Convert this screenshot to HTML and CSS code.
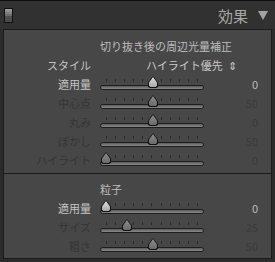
FILE: index.html
```html
<!DOCTYPE html>
<html lang="ja">
<head>
    <meta charset="UTF-8">
    <title>効果</title>
    <link rel="stylesheet" href="styles.css">
</head>
<body>
    <div class="header">
        <span class="toggle"></span>
        <span class="title">効果</span>
        <span class="arrow"></span>
    </div>

    <div class="panel">
        <!-- vignette -->
        <div class="section">
            <div class="row">
                <span></span>
                <span class="heading">切り抜き後の周辺光量補正</span>
            </div>
            <div class="row">
                <span class="label on">スタイル</span>
                <span class="popup">ハイライト優先 <span class="updown">&#8661;</span></span>
            </div>
            <div class="row">
                <span class="label on">適用量</span>
                <div class="slider on"><div class="ticks"><i></i><i></i><i></i><i></i><i></i><i></i><i></i><i></i><i></i><i></i><i></i></div><div class="track"></div><span class="thumb" style="left: 50%"></span></div>
                <span class="value on">0</span>
            </div>
            <div class="row">
                <span class="label">中心点</span>
                <div class="slider"><div class="ticks"><i></i><i></i><i></i><i></i><i></i><i></i><i></i><i></i><i></i><i></i><i></i></div><div class="track"></div><span class="thumb" style="left: 50%"></span></div>
                <span class="value">50</span>
            </div>
            <div class="row">
                <span class="label">丸み</span>
                <div class="slider"><div class="ticks"><i></i><i></i><i></i><i></i><i></i><i></i><i></i><i></i><i></i><i></i><i></i></div><div class="track"></div><span class="thumb" style="left: 50%"></span></div>
                <span class="value">0</span>
            </div>
            <div class="row">
                <span class="label">ぼかし</span>
                <div class="slider"><div class="ticks"><i></i><i></i><i></i><i></i><i></i><i></i><i></i><i></i><i></i><i></i><i></i></div><div class="track"></div><span class="thumb" style="left: 50%"></span></div>
                <span class="value">50</span>
            </div>
            <div class="row">
                <span class="label">ハイライト</span>
                <div class="slider"><div class="ticks"><i></i><i></i><i></i><i></i><i></i><i></i><i></i><i></i><i></i><i></i><i></i></div><div class="track"></div><span class="thumb" style="left: 0%"></span></div>
                <span class="value">0</span>
            </div>
        </div>

        <!-- grain -->
        <div class="section grain">
            <div class="row">
                <span></span>
                <span class="heading">粒子</span>
            </div>
            <div class="row">
                <span class="label on">適用量</span>
                <div class="slider on"><div class="ticks"><i></i><i></i><i></i><i></i><i></i><i></i><i></i><i></i><i></i><i></i><i></i></div><div class="track"></div><span class="thumb" style="left: 0%"></span></div>
                <span class="value on">0</span>
            </div>
            <div class="row">
                <span class="label">サイズ</span>
                <div class="slider"><div class="ticks"><i></i><i></i><i></i><i></i><i></i><i></i><i></i><i></i><i></i><i></i><i></i></div><div class="track"></div><span class="thumb" style="left: 25%"></span></div>
                <span class="value">25</span>
            </div>
            <div class="row">
                <span class="label">粗さ</span>
                <div class="slider"><div class="ticks"><i></i><i></i><i></i><i></i><i></i><i></i><i></i><i></i><i></i><i></i><i></i></div><div class="track"></div><span class="thumb" style="left: 50%"></span></div>
                <span class="value">50</span>
            </div>
        </div>
    </div>
</body>
</html>
```

FILE: styles.css
```css
body {
    margin: 0;
    background-color: #2b2b2b;
    font-family: "Noto Sans CJK JP", "Noto Sans", sans-serif;
    font-size: 11px;
    overflow: hidden;
}

.header {
    height: 28px;
    border-top: 1px solid #0e0e0e;
    background-color: #313131;
    display: flex;
    align-items: center;
    padding: 0 7px 0 4px;
}

.toggle {
    width: 7px;
    height: 13px;
    border: 1px solid #111;
    background: linear-gradient(#a0a0a0, #6a6a6a 50%, #505050 52%, #4a4a4a);
}

.title {
    margin-left: auto;
    font-size: 15px;
    color: #a9a9a9;
}

.arrow {
    margin-left: 10px;
    width: 0;
    height: 0;
    border-left: 5px solid transparent;
    border-right: 5px solid transparent;
    border-top: 9px solid #a3a3a3;
}

.panel {
    margin: 0 3px;
    border: 1px solid #1b1b1b;
    background-color: #474747;
}

.section {
    padding: 6px 0 4px;
}

.section.grain {
    border-top: 1px solid #1b1b1b;
    padding: 5px 0 3px;
}

.row {
    height: 19px;
    display: grid;
    grid-template-columns: 87px 104px 45px;
    column-gap: 9px;
    align-items: center;
}

.heading {
    grid-column: 2 / 4;
    color: #bdbdbd;
    white-space: nowrap;
}

.label {
    text-align: right;
    color: #353535;
    white-space: nowrap;
}

.label.on {
    color: #c4c4c4;
}

.popup {
    grid-column: 2 / 4;
    padding-left: 46px;
    color: #cacaca;
    white-space: nowrap;
}

.updown {
    margin-left: 3px;
    font-size: 11px;
}

.value {
    text-align: right;
    color: #3a3a3a;
}

.value.on {
    color: #bcbcbc;
}

.slider {
    position: relative;
    height: 19px;
}

.ticks {
    display: flex;
    justify-content: space-between;
    margin: 5px 6px 0;
    height: 3px;
}

.ticks i {
    width: 1px;
    background-color: #2a2a2a;
}

.track {
    margin-top: 3px;
    height: 3px;
    border: 1px solid #1e1e1e;
    border-radius: 3px;
    background: linear-gradient(#5a5a5a, #8a8a8a);
}

.thumb {
    position: absolute;
    top: 2px;
    width: 10px;
    height: 12px;
    margin-left: 1px;
    transform: translateX(-50%);
    background: #111;
    clip-path: polygon(50% 0, 100% 55%, 100% 85%, 85% 100%, 15% 100%, 0 85%, 0 55%);
}

.thumb::after {
    content: "";
    position: absolute;
    inset: 1px;
    background: linear-gradient(#8c8c8c, #6a6a6a);
    clip-path: polygon(50% 0, 100% 55%, 100% 85%, 85% 100%, 15% 100%, 0 85%, 0 55%);
}

.slider.on .thumb::after {
    background: linear-gradient(#e0e0e0, #a8a8a8);
}

.thumb[style="left: 0%"] {
    margin-left: 6px;
}
```
